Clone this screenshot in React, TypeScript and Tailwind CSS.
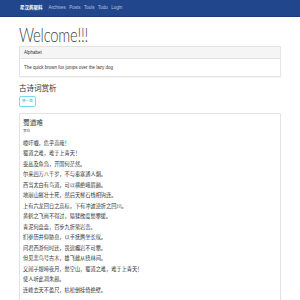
const navLinks = ['Archives', 'Posts', 'Tools', 'Todo', 'Login'];

const poem = [
  '噫吁嚱，危乎高哉！',
  '蜀道之难，难于上青天！',
  '蚕丛及鱼凫，开国何茫然。',
  '尔来四万八千岁，不与秦塞通人烟。',
  '西当太白有鸟道，可以横绝峨眉巅。',
  '地崩山摧壮士死，然后天梯石栈相钩连。',
  '上有六龙回日之高标，下有冲波逆折之回川。',
  '黄鹤之飞尚不得过，猿猱欲度愁攀援。',
  '青泥何盘盘，百步九折萦岩峦。',
  '扪参历井仰胁息，以手抚膺坐长叹。',
  '问君西游何时还，畏途巉岩不可攀。',
  '但见悲鸟号古木，雄飞雌从绕林间。',
  '又闻子规啼夜月，愁空山，蜀道之难，难于上青天！',
  '使人听此凋朱颜。',
  '连峰去天不盈尺，枯松倒挂倚绝壁。',
];

export default function App() {
  return (
    <div
      className="h-[300px] overflow-hidden bg-white text-[#333]"
      style={{ fontFamily: '"Liberation Sans", "Noto Sans CJK SC", sans-serif' }}
    >
      <nav className="h-[17px] border-b border-[#1c3a75] bg-[#22468c]">
        <div className="flex h-full items-center pl-[20px]">
          <span className="text-[4.5px] font-bold text-white">星汉酱聚料</span>
          <div className="ml-[6px] flex gap-[3.5px] text-[4.5px] text-[#b8c3db]">
            {navLinks.map((l) => (
              <span key={l}>{l}</span>
            ))}
          </div>
        </div>
      </nav>

      <div className="mx-[19px]">
        <h1
          className="mt-[6px] origin-left scale-x-[0.74] text-[20px] font-light leading-[22px] tracking-[-0.3px] text-[#444]"
          style={{ fontFamily: 'Lato, sans-serif' }}
        >
          Welcome!!!
        </h1>

        <div className="mt-[1px] rounded-[1px] border border-[#e3e3e3] shadow-[0_1px_1px_rgba(0,0,0,0.04)]">
          <div className="h-[12px] border-b border-[#e3e3e3] bg-[#f5f5f5] px-[4px] text-[4.5px] leading-[11px] text-[#333]">
            Alphabet
          </div>
          <div className="h-[17px] px-[4px] text-[4.5px] leading-[17px]">
            The quick brown fox jumps over the lazy dog
          </div>
        </div>

        <h2 className="mt-[7px] text-[7.5px] leading-[10px] text-[#333]">古诗词赏析</h2>

        <button className="mt-[2px] flex h-[11px] w-[17px] items-center justify-center rounded-[2px] border border-[#7fd6ef] text-[3.6px] text-[#31b0d5]">
          换一首
        </button>

        <div className="mt-[6px] h-[200px] rounded-[1px] border border-[#e3e3e3] px-[3px] pt-[4px]">
          <div className="text-[6.7px] leading-[9px] text-[#333]">蜀道难</div>
          <div className="mt-[2px] text-[3.6px] leading-[5px] text-[#555]">李白</div>
          <div className="mt-[3.5px] text-[5.2px] leading-[10.5px] text-[#333]">
            {poem.map((line, i) => (
              <div key={i}>{line}</div>
            ))}
          </div>
        </div>
      </div>
    </div>
  );
}
